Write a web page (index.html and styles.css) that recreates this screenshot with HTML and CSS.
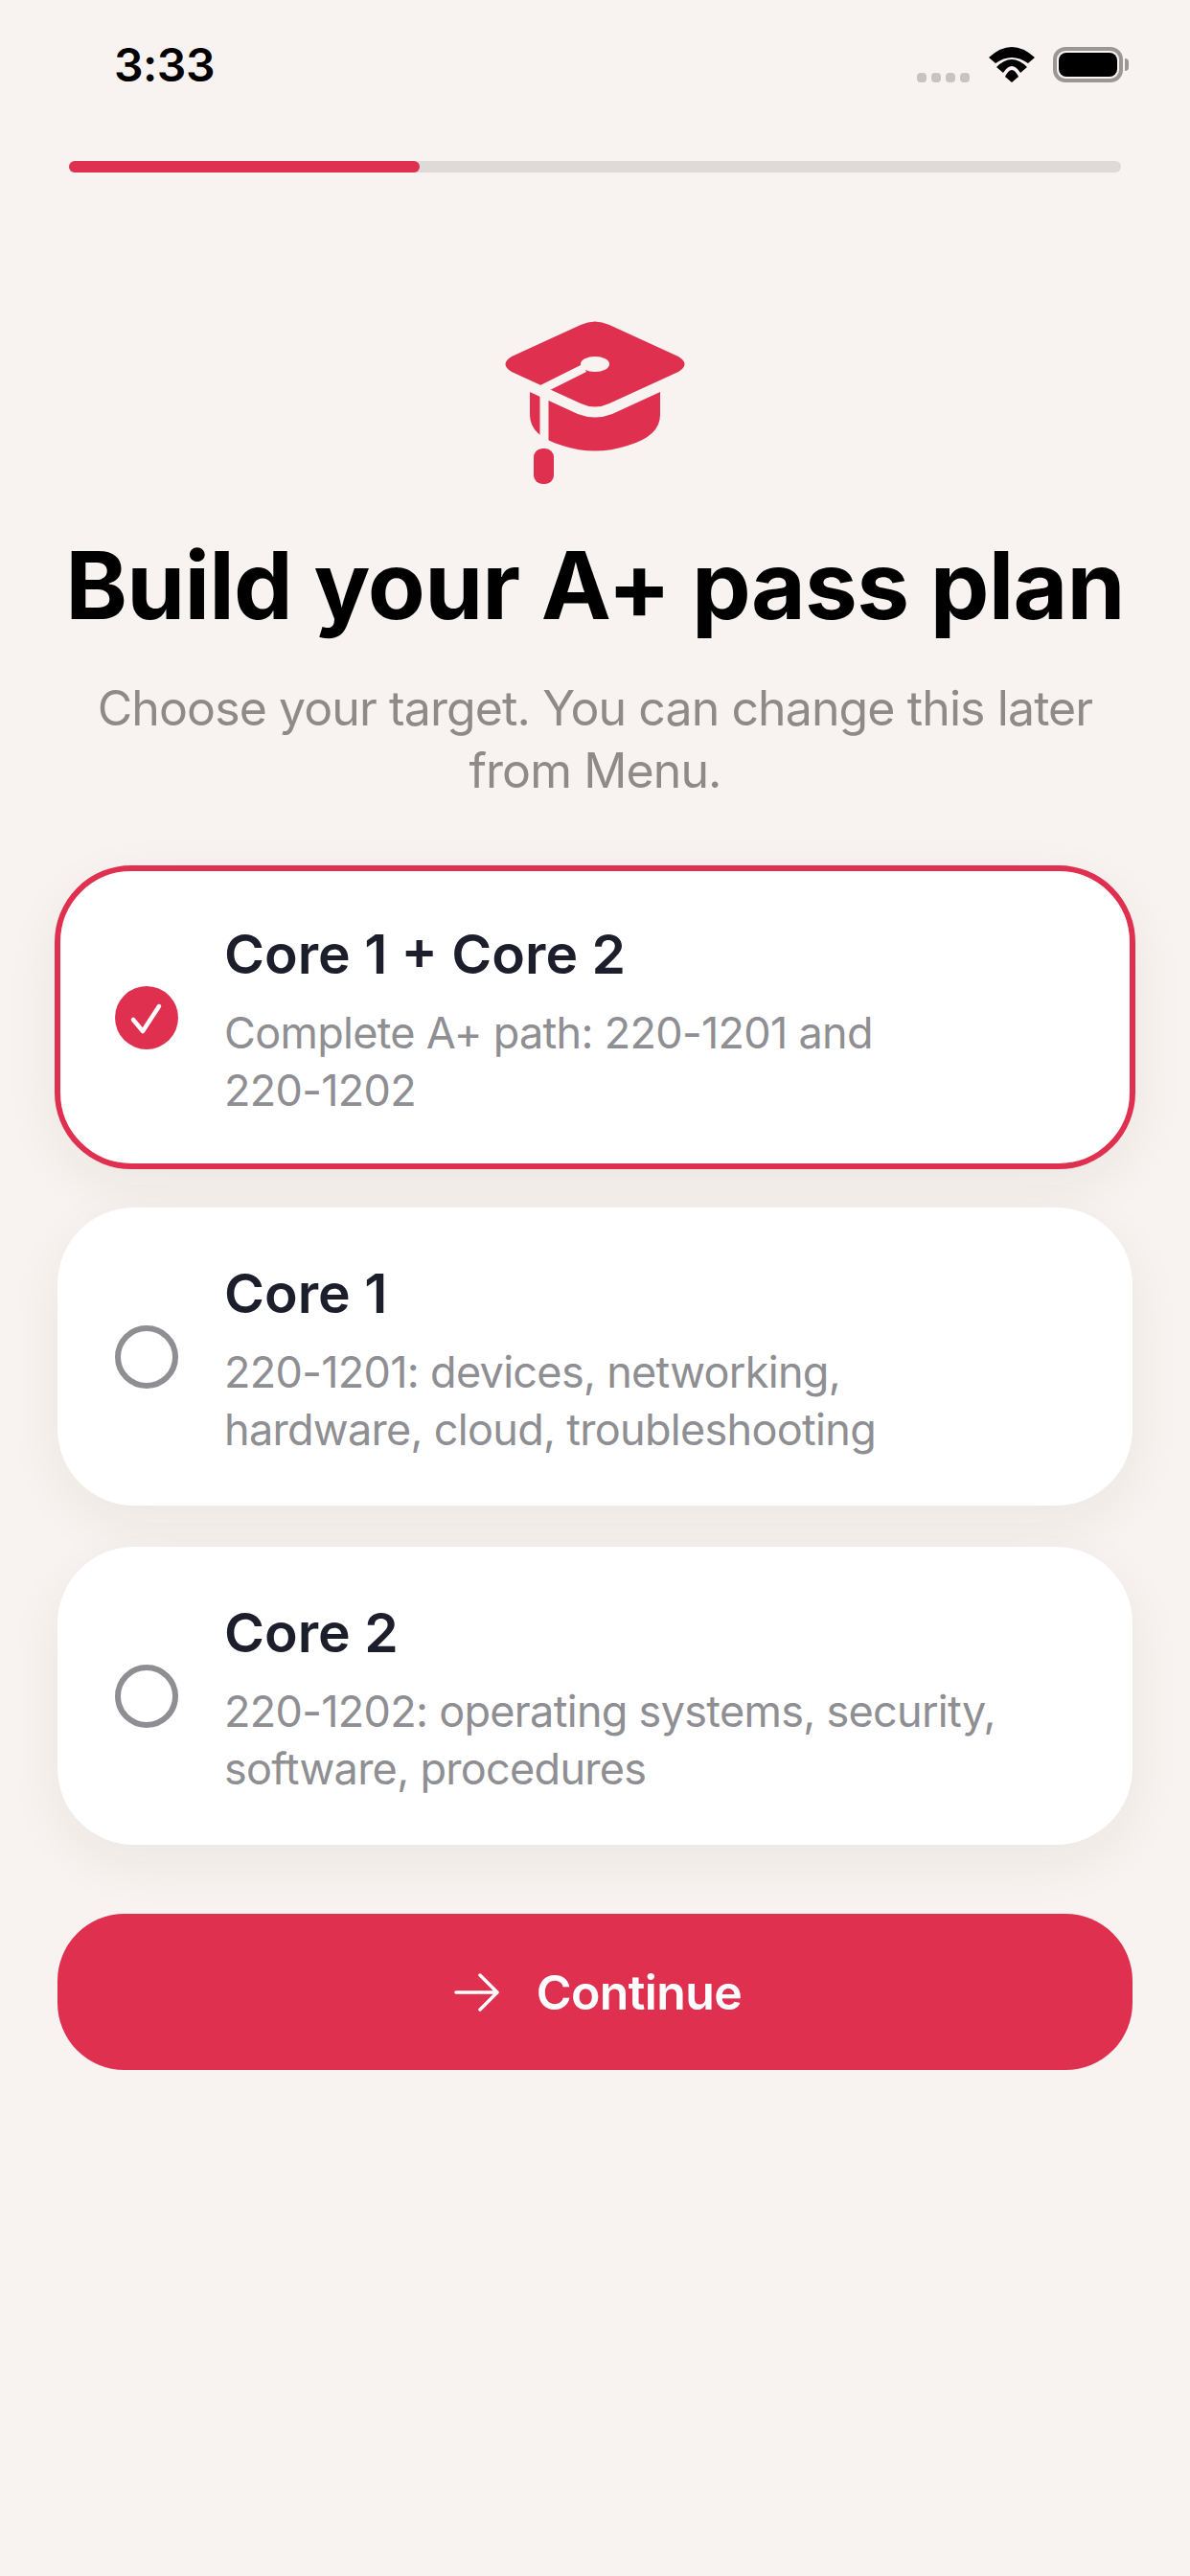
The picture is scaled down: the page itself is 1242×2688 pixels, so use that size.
FILE: index.html
```html
<html>
  <head>
    <link rel="stylesheet" href="styles.css">
  </head>
  <body>
    <div class="status-bar">
      <div class="time">3:33</div>
      <div class="status-icons">
        <div class="signal"><span></span><span></span><span></span><span></span></div>
        <svg class="wifi" viewBox="0 0 48 37">
          <path d="M0 11 Q24 -11 48 11 L41 17 Q24 5 7 17 Z" fill="#000"/>
          <path d="M8 21 Q24 5 40 21 L33 27 Q24 13 15 27 Z" fill="#000"/>
          <path d="M17 31 Q24 17 31 31 L24 37 Z" fill="#000"/>
        </svg>
        <div class="battery"><div class="battery-fill"></div></div>
      </div>
    </div>

    <div class="progress"><div class="progress-fill"></div></div>

    <div class="hero">
      <svg class="cap" viewBox="39 20 205 180">
        <path d="M73 99 L123 122 Q141 129 159 122 L209 99 L209 123 Q209 145 175 155 Q141 166 107 155 Q73 145 73 123 Z" fill="#e03050"/>
        <path d="M126 29 Q141 22 156 29 L228 62 Q241 70 228 78 L156 111 Q141 118 126 111 L54 78 Q41 70 54 62 Z" fill="#e03050"/>
        <path d="M130 74 L88 95 L88 160" fill="none" stroke="#f8f3f0" stroke-width="9"/>
        <ellipse cx="141" cy="70" rx="15" ry="8" fill="#f8f3f0"/>
        <rect x="77" y="158" width="21" height="37" rx="9" fill="#e03050"/>
      </svg>
      <h1>Build your A+ pass plan</h1>
      <p class="subtitle">Choose your target. You can change this later from Menu.</p>
    </div>

    <div class="options">
      <div class="option selected">
        <div class="radio checked">
          <svg viewBox="0 0 66 66"><path d="M19 35 L29 47 L46 21" fill="none" stroke="#fff" stroke-width="4.5" stroke-linecap="round" stroke-linejoin="round"/></svg>
        </div>
        <div class="option-text">
          <div class="option-title">Core 1 + Core 2</div>
          <div class="option-desc">Complete A+ path: 220-1201 and<br>220-1202</div>
        </div>
      </div>
      <div class="option">
        <div class="radio"></div>
        <div class="option-text">
          <div class="option-title">Core 1</div>
          <div class="option-desc">220-1201: devices, networking,<br>hardware, cloud, troubleshooting</div>
        </div>
      </div>
      <div class="option">
        <div class="radio"></div>
        <div class="option-text">
          <div class="option-title">Core 2</div>
          <div class="option-desc">220-1202: operating systems, security,<br>software, procedures</div>
        </div>
      </div>
    </div>

    <button class="continue">
      <svg viewBox="0 0 48 40"><path d="M2 20 H45 M27 2 L45 20 L27 38" fill="none" stroke="#fff" stroke-width="3.5" stroke-linecap="round" stroke-linejoin="round"/></svg>
      Continue
    </button>
  </body>
</html>
```

FILE: styles.css
```css
body {
  background: #f8f3f0;
  margin: 0;
  height: 2688px;
  overflow: hidden;
  font-family: Inter, "Liberation Sans", sans-serif;
  color: #000;
}
.status-bar {
  display: flex;
  justify-content: space-between;
  align-items: flex-start;
  padding: 38px 70px 0 119px;
  height: 130px;
  box-sizing: border-box;
}
.time {
  font-size: 48px;
  line-height: 60px;
  font-weight: 600;
  letter-spacing: -0.5px;
}
.status-icons {
  display: flex;
  align-items: flex-end;
  padding-top: 11px;
}
.signal {
  display: flex;
  gap: 5px;
  margin-right: 20px;
}
.signal span {
  width: 10px;
  height: 10px;
  border-radius: 4px;
  background: #c6c3c1;
}
.wifi {
  width: 48px;
  height: 37px;
  margin-right: 19px;
}
.battery {
  position: relative;
  width: 73px;
  height: 37px;
  box-sizing: border-box;
  border: 4px solid #9c9794;
  border-radius: 13px;
  padding: 2px;
}
.battery::after {
  content: "";
  position: absolute;
  right: -10px;
  top: 8px;
  width: 4px;
  height: 13px;
  border-radius: 0 4px 4px 0;
  background: #9c9794;
}
.battery-fill {
  height: 100%;
  background: #000;
  border-radius: 8px;
}
.progress {
  height: 12px;
  margin: 38px 72px 0;
  background: #dedada;
  border-radius: 6px;
}
.progress-fill {
  width: 366px;
  height: 100%;
  background: #e03050;
  border-radius: 6px;
}
.hero {
  text-align: center;
  padding-top: 150px;
}
.cap {
  display: block;
  width: 205px;
  height: 180px;
  margin: 0 auto;
}
h1 {
  margin: 39px 0 0;
  font-size: 98px;
  line-height: 124px;
  font-weight: 700;
  letter-spacing: -0.8px;
}
.subtitle {
  margin: 34px auto 0;
  width: 1060px;
  font-size: 50px;
  line-height: 65px;
  letter-spacing: -0.9px;
  color: #8e8a8a;
}
.options {
  display: flex;
  flex-direction: column;
  gap: 43px;
  margin: 69px 60px 0;
}
.option {
  display: flex;
  align-items: center;
  gap: 48px;
  height: 311px;
  box-sizing: border-box;
  padding: 0 60px;
  background: #fff;
  border-radius: 80px;
  box-shadow: 0 18px 60px rgba(60, 30, 30, 0.06);
}
.option.selected {
  height: 317px;
  margin: -3px;
  padding: 0 57px;
  border: 6px solid #e03050;
}
.radio {
  width: 66px;
  height: 66px;
  flex: none;
  box-sizing: border-box;
  border: 6px solid #8e8e93;
  border-radius: 50%;
}
.radio.checked {
  border: none;
  background: #e03050;
}
.radio svg {
  display: block;
  width: 66px;
  height: 66px;
}
.option-text {
  padding-top: 6px;
}
.option-title {
  font-size: 57px;
  line-height: 68px;
  font-weight: 600;
  color: #1c1e2b;
}
.option-desc {
  margin-top: 18px;
  font-size: 45px;
  line-height: 60px;
  letter-spacing: -0.7px;
  color: #8e8e93;
}
.continue {
  display: flex;
  align-items: center;
  justify-content: center;
  gap: 38px;
  width: 1122px;
  height: 163px;
  margin: 72px 0 0 60px;
  padding: 0 0 0 6px;
  background: #e03050;
  color: #fff;
  border: none;
  border-radius: 70px;
  font-family: inherit;
  font-size: 50px;
  font-weight: 600;
  letter-spacing: -0.6px;
}
.continue svg {
  width: 48px;
  height: 40px;
}
```
